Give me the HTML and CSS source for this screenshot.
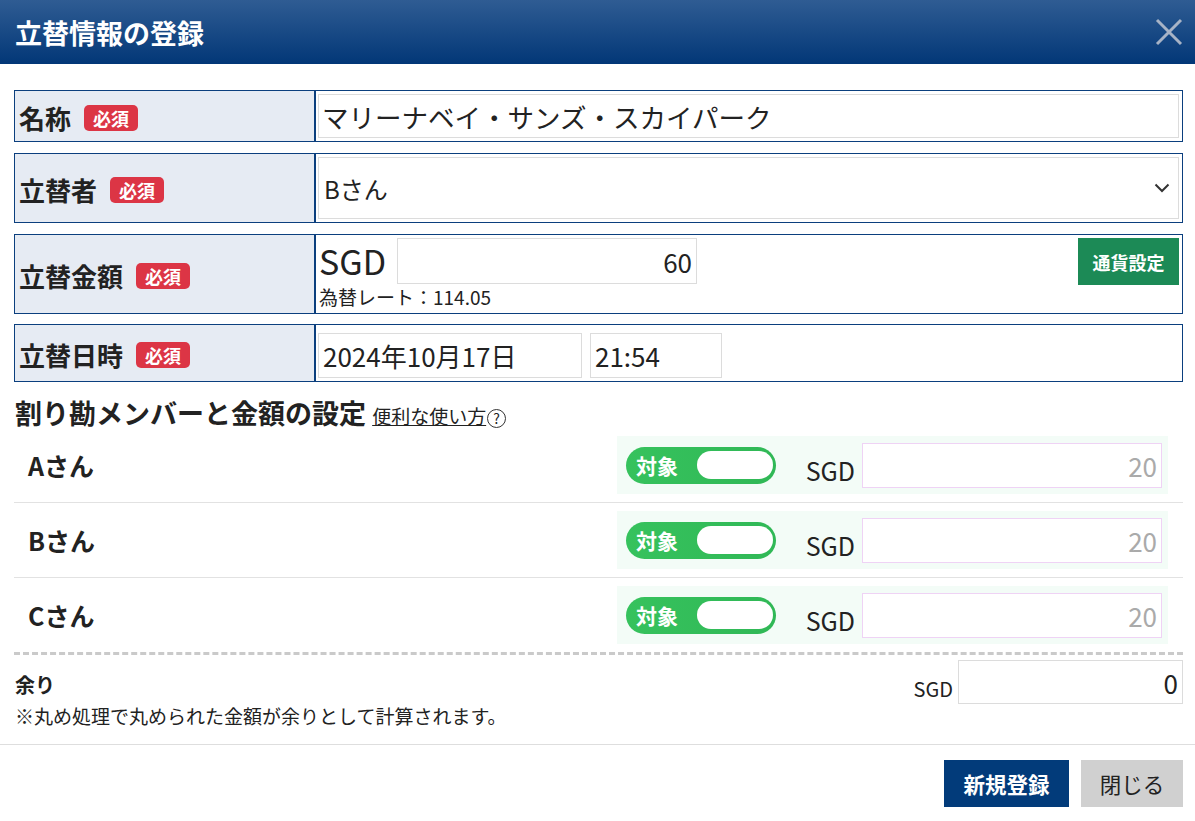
FILE: index.html
```html
<!DOCTYPE html>
<html>
<head>
    <title>立替情報の登録</title>
    <link rel="stylesheet" href="styles.css">
</head>
<body>
    <header class="modal-head">
        <h1>立替情報の登録</h1>
        <button class="close-btn" type="button">
            <svg width="28" height="28" viewBox="0 0 28 28">
                <path d="M2 2 L26 26 M26 2 L2 26" stroke="#a7b3c6" stroke-width="3" fill="none"/>
            </svg>
        </button>
    </header>
    <main class="modal-body">
        <div class="form-row row-name">
            <div class="form-label">名称<span class="req">必須</span></div>
            <div class="form-value">
                <input class="text-input full" type="text" value="マリーナベイ・サンズ・スカイパーク">
            </div>
        </div>
        <div class="form-row row-payer">
            <div class="form-label">立替者<span class="req">必須</span></div>
            <div class="form-value">
                <div class="select-box">
                    <span>Bさん</span>
                    <svg width="16" height="10" viewBox="0 0 16 10">
                        <path d="M1.5 1.5 L8 8 L14.5 1.5" stroke="#333" stroke-width="2" fill="none"/>
                    </svg>
                </div>
            </div>
        </div>
        <div class="form-row row-amount">
            <div class="form-label">立替金額<span class="req">必須</span></div>
            <div class="form-value amount-value">
                <div class="amount-main">
                    <div class="amount-line">
                        <span class="currency">SGD</span>
                        <input class="text-input amount-input" type="text" value="60">
                    </div>
                    <div class="rate">為替レート：114.05</div>
                </div>
                <button class="currency-btn" type="button">通貨設定</button>
            </div>
        </div>
        <div class="form-row row-date">
            <div class="form-label">立替日時<span class="req">必須</span></div>
            <div class="form-value date-value">
                <input class="text-input date-input" type="text" value="2024年10月17日">
                <input class="text-input time-input" type="text" value="21:54">
            </div>
        </div>

        <h2 class="split-title">割り勘メンバーと金額の設定 <a href="#" class="help-link">便利な使い方</a><span class="help-icon">?</span></h2>

        <div class="member-list">
            <div class="member-row">
                <div class="member-name">Aさん</div>
                <div class="member-panel">
                    <div class="toggle"><span class="toggle-text">対象</span><span class="toggle-knob"></span></div>
                    <span class="member-currency">SGD</span>
                    <input class="text-input member-input" type="text" value="20">
                </div>
            </div>
            <div class="member-row">
                <div class="member-name">Bさん</div>
                <div class="member-panel">
                    <div class="toggle"><span class="toggle-text">対象</span><span class="toggle-knob"></span></div>
                    <span class="member-currency">SGD</span>
                    <input class="text-input member-input" type="text" value="20">
                </div>
            </div>
            <div class="member-row">
                <div class="member-name">Cさん</div>
                <div class="member-panel">
                    <div class="toggle"><span class="toggle-text">対象</span><span class="toggle-knob"></span></div>
                    <span class="member-currency">SGD</span>
                    <input class="text-input member-input" type="text" value="20">
                </div>
            </div>
        </div>

        <div class="remainder">
            <div class="remainder-text">
                <div class="remainder-title">余り</div>
                <div class="remainder-note">※丸め処理で丸められた金額が余りとして計算されます。</div>
            </div>
            <div class="remainder-amount">
                <span class="remainder-currency">SGD</span>
                <input class="text-input remainder-input" type="text" value="0">
            </div>
        </div>
    </main>
    <footer class="modal-foot">
        <button class="btn btn-primary" type="button">新規登録</button>
        <button class="btn btn-gray" type="button">閉じる</button>
    </footer>
</body>
</html>
```

FILE: styles.css
```css
body {
    margin: 0;
    background-color: #fff;
    color: #222;
    font-family: "Noto Sans CJK JP", "Noto Sans", sans-serif;
}
.modal-head {
    height: 64px;
    background: linear-gradient(#2f5c93, #023777);
    display: flex;
    align-items: center;
    justify-content: space-between;
    padding: 0 12px 0 15px;
}
.modal-head h1 {
    margin: 0;
    color: #fff;
    font-size: 27px;
    font-weight: bold;
    line-height: 1;
}
.close-btn {
    background: none;
    border: none;
    padding: 0;
    width: 28px;
    height: 28px;
    cursor: pointer;
}
.modal-body {
    padding: 26px 12px 0 14px;
}
.form-row {
    display: flex;
    border: 1px solid #0b3f7e;
    margin-bottom: 11px;
}
.row-amount {
    margin-bottom: 10px;
}
.form-label {
    width: 295px;
    flex-shrink: 0;
    background-color: #e6ebf3;
    border-right: 2px solid #0b3f7e;
    display: flex;
    align-items: center;
    padding: 3px 0 0 4px;
    font-size: 26px;
    font-weight: bold;
}
.req {
    display: inline-block;
    margin-left: 13px;
    background-color: #dc3545;
    color: #fff;
    font-size: 18px;
    font-weight: bold;
    line-height: 26px;
    padding: 0 9px;
    border-radius: 5px;
}
.form-value {
    flex: 1;
    padding: 3px 3px 3px 2px;
}
.text-input {
    box-sizing: border-box;
    border: 1px solid #dcdcdc;
    font-family: "Noto Sans CJK JP", "Noto Sans", sans-serif;
    font-size: 26px;
    color: #222;
    padding: 0 4px;
    margin: 0;
    background: #fff;
    outline: none;
}
.full {
    width: 100%;
    height: 44px;
    font-size: 26.5px;
    padding: 0 3px;
}
.select-box {
    box-sizing: border-box;
    height: 62px;
    border: 1px solid #dcdcdc;
    display: flex;
    align-items: center;
    justify-content: space-between;
    padding: 0 8px 0 5px;
    font-size: 24px;
}
.amount-value {
    display: flex;
    justify-content: space-between;
}
.amount-line {
    display: flex;
    align-items: center;
}
.currency {
    font-size: 34px;
    line-height: 46px;
    padding-left: 1px;
    width: 78px;
}
.amount-input {
    width: 300px;
    height: 46px;
    text-align: right;
}
.rate {
    font-size: 19px;
    line-height: 26px;
    padding-left: 1px;
}
.currency-btn {
    width: 101px;
    height: 47px;
    border: none;
    background-color: #1c8a56;
    color: #fff;
    font-family: "Noto Sans CJK JP", sans-serif;
    font-size: 18px;
    font-weight: bold;
    cursor: pointer;
}
.date-value {
    display: flex;
    gap: 8px;
    padding-top: 8px;
}
.date-input {
    width: 264px;
    height: 45px;
}
.time-input {
    width: 132px;
    height: 45px;
}
.split-title {
    margin: 15px 0 0 1px;
    height: 31px;
    font-size: 27px;
    line-height: 31px;
    font-weight: bold;
}
.help-link {
    font-size: 19px;
    font-weight: normal;
    color: #222;
}
.help-icon {
    display: inline-block;
    box-sizing: border-box;
    width: 19px;
    height: 19px;
    margin-left: 1px;
    border: 1px solid #333;
    border-radius: 50%;
    font-size: 14px;
    font-weight: normal;
    line-height: 17px;
    text-align: center;
}
.member-row {
    display: flex;
    align-items: center;
    padding: 8px 0;
    border-bottom: 1px solid #e2e2e2;
}
.member-row:last-child {
    border-bottom: none;
}
.member-name {
    flex: 1;
    padding-left: 14px;
    font-size: 25px;
    font-weight: bold;
}
.member-panel {
    width: 551px;
    height: 58px;
    box-sizing: border-box;
    margin-right: 15px;
    background-color: #f3fcf7;
    display: flex;
    align-items: center;
    padding: 0 6px 0 9px;
}
.toggle {
    width: 150px;
    height: 37px;
    box-sizing: border-box;
    border-radius: 19px;
    background: linear-gradient(90deg, #36c25d, #30b856);
    display: flex;
    align-items: center;
    justify-content: space-between;
    padding: 0 3px 0 10px;
}
.toggle-text {
    color: #fff;
    font-size: 21px;
    font-weight: bold;
}
.toggle-knob {
    width: 76px;
    height: 28px;
    background-color: #fff;
    border-radius: 14px;
}
.member-currency {
    margin-left: auto;
    margin-right: 7px;
    font-size: 25px;
    align-self: flex-end;
    line-height: 36px;
    margin-bottom: 6px;
}
.member-input {
    width: 300px;
    height: 45px;
    border-color: #efd3f5;
    color: #aaa;
    text-align: right;
    align-self: flex-start;
    margin-top: 7px;
}
.remainder {
    display: flex;
    justify-content: space-between;
    border-top: 3px dashed #cacaca;
    padding: 5px 0 14px 1px;
}
.remainder-title {
    padding-top: 10px;
    font-size: 20px;
    line-height: 30px;
    font-weight: bold;
}
.remainder-note {
    margin-top: 2px;
    font-size: 19px;
    line-height: 28px;
}
.remainder-amount {
    display: flex;
    align-items: flex-end;
    align-self: flex-start;
}
.remainder-currency {
    font-size: 20px;
    line-height: 30px;
    margin-right: 5px;
}
.remainder-input {
    width: 225px;
    height: 44px;
    text-align: right;
}
.modal-foot {
    border-top: 1px solid #dedede;
    padding: 15px 12px 0 0;
    display: flex;
    justify-content: flex-end;
    gap: 12px;
}
.btn {
    height: 47px;
    border: none;
    font-family: "Noto Sans CJK JP", sans-serif;
    font-size: 21.5px;
    cursor: pointer;
}
.btn-primary {
    width: 125px;
    background-color: #023b7a;
    color: #fff;
    font-weight: bold;
}
.btn-gray {
    width: 102px;
    background-color: #d0d0d0;
    color: #222;
}
```
